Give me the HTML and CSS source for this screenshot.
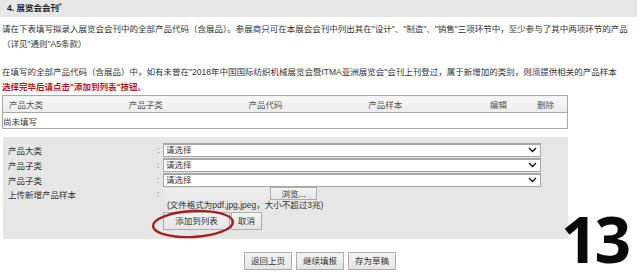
FILE: index.html
```html
<!DOCTYPE html>
<html lang="zh">
<head>
    <meta charset="UTF-8">
    <meta name="viewport" content="width=device-width, initial-scale=1.0">
    <title>展览会会刊</title>
    <link rel="stylesheet" href="styles.css">
</head>
<body>

<div class="page">
    <div class="section-title">4. 展览会会刊<span class="req">*</span></div>

    <div class="intro">
        <p>请在下表填写拟录入展览会会刊中的全部产品代码（含展品）。参展商只可在本展会会刊中列出其在"设计"、"制造"、"销售"三项环节中，至少参与了其中两项环节的产品<br>（详见"通则"A5条款）</p>
        <p>在填写的全部产品代码（含展品）中，如有未曾在"2018年中国国际纺织机械展览会暨ITMA亚洲展览会"会刊上刊登过，属于新增加的类别，则须提供相关的产品样本<br>
        <strong class="warn">选择完毕后请点击"添加到列表"按钮。</strong></p>
    </div>

    <table class="product-table">
        <thead>
            <tr>
                <th class="col-cat">产品大类</th>
                <th class="col-sub">产品子类</th>
                <th class="col-code">产品代码</th>
                <th class="col-sample">产品样本</th>
                <th class="col-edit">编辑</th>
                <th class="col-del">删除</th>
            </tr>
        </thead>
        <tbody>
            <tr>
                <td colspan="6">尚未填写</td>
            </tr>
        </tbody>
    </table>

    <div class="form-box">
        <div class="form-row">
            <label class="form-label">产品大类</label>
            <span class="colon">:</span>
            <div class="select-wrap">
                <select><option>请选择</option></select>
                <svg class="chevron" width="9" height="6" viewBox="0 0 9 6"><path d="M1 1 L4.5 4.5 L8 1" fill="none" stroke="#111" stroke-width="1.3"/></svg>
            </div>
        </div>
        <div class="form-row">
            <label class="form-label">产品子类</label>
            <span class="colon">:</span>
            <div class="select-wrap">
                <select><option>请选择</option></select>
                <svg class="chevron" width="9" height="6" viewBox="0 0 9 6"><path d="M1 1 L4.5 4.5 L8 1" fill="none" stroke="#111" stroke-width="1.3"/></svg>
            </div>
        </div>
        <div class="form-row">
            <label class="form-label">产品子类</label>
            <span class="colon">:</span>
            <div class="select-wrap">
                <select><option>请选择</option></select>
                <svg class="chevron" width="9" height="6" viewBox="0 0 9 6"><path d="M1 1 L4.5 4.5 L8 1" fill="none" stroke="#111" stroke-width="1.3"/></svg>
            </div>
        </div>
        <div class="form-row upload-row">
            <label class="form-label">上传新增产品样本</label>
            <span class="colon">:</span>
            <div class="file-input">
                <span class="file-path"></span>
                <button class="btn browse">浏览...</button>
            </div>
        </div>
        <div class="hint">(文件格式为pdf,jpg,jpeg，大小不超过3兆)</div>
        <div class="form-buttons">
            <button class="btn btn-add">添加到列表</button>
            <button class="btn btn-cancel">取消</button>
            <svg class="circle-mark" width="86" height="32" viewBox="0 0 86 32">
                <ellipse cx="43" cy="16" rx="40" ry="13" transform="rotate(-3 43 16)" fill="none" stroke="#a3221f" stroke-width="2.4"/>
            </svg>
        </div>
    </div>

    <div class="actions">
        <button class="btn">返回上页</button>
        <button class="btn">继续填报</button>
        <button class="btn">存为草稿</button>
    </div>

    <div class="page-num">13</div>
</div>

</body>
</html>
```

FILE: styles.css
```css
body {
    margin: 0;
    font-family: "Liberation Sans", "Noto Sans CJK SC", sans-serif;
    font-size: 8.5px;
    color: #333;
    background-color: #fff;
}
.page {
    position: relative;
    width: 640px;
    height: 274px;
    overflow: hidden;
}
.section-title {
    height: 17px;
    line-height: 17px;
    padding-left: 7px;
    margin-right: 3px;
    background-color: #e6e6e6;
    font-weight: bold;
    color: #222;
}
.req {
    color: #d00;
    font-size: 7px;
    vertical-align: top;
    line-height: 12px;
}
.intro {
    padding: 5px 0 0 2px;
}
.intro p {
    margin: 0 0 13px 0;
    line-height: 15px;
    white-space: nowrap;
}
.warn {
    color: #b5181c;
}
.product-table {
    width: 566px;
    margin: -13px 0 0 2px;
    border-collapse: collapse;
    border: 1px solid #a9a9a9;
}
.product-table th {
    height: 16px;
    padding: 0 0 0 6px;
    text-align: left;
    font-weight: normal;
    color: #555;
    background: linear-gradient(#f7f7f7, #ececec);
    border-bottom: 1px solid #a9a9a9;
}
.product-table td {
    height: 15px;
    padding: 0;
    color: #333;
}
.col-cat { width: 114px; }
.col-sub { width: 114px; }
.col-code { width: 114px; }
.col-sample { width: 116px; }
.col-edit { width: 41px; }
.col-del { width: 30px; }

.form-box {
    width: 560px;
    margin: 8px 0 0 3px;
    padding: 5px 0 9px 5px;
    background-color: #e6e6e6;
}
.form-row {
    display: flex;
    align-items: center;
    height: 15px;
}
.form-label {
    width: 149px;
    color: #333;
}
.colon {
    width: 6px;
    color: #777;
}
.select-wrap {
    position: relative;
    width: 378px;
    height: 14px;
}
.select-wrap select {
    appearance: none;
    -webkit-appearance: none;
    width: 100%;
    height: 14px;
    margin: 0;
    padding: 0 0 0 2px;
    border: 1px solid #a6a6a6;
    border-top: 2px solid #a6a6a6;
    border-radius: 0;
    background-color: #fff;
    font-family: inherit;
    font-size: 8.5px;
    line-height: 11px;
    color: #333;
}
.chevron {
    position: absolute;
    right: 4px;
    top: 4px;
}
.upload-row {
    height: 13px;
}
.file-input {
    display: flex;
    align-items: center;
    height: 13px;
}
.file-path {
    width: 107px;
    height: 12px;
    background-color: #ebebeb;
}
.btn {
    height: 15px;
    padding: 0 4px;
    border: 1px solid #adadad;
    border-radius: 0;
    background: linear-gradient(#f4f4f4, #e4e4e4);
    font-family: inherit;
    font-size: 8.5px;
    line-height: 13px;
    color: #333;
    cursor: pointer;
}
.browse {
    width: 47px;
    height: 13px;
    padding: 0;
}
.hint {
    padding-left: 159px;
    line-height: 10px;
    color: #333;
}
.form-buttons {
    position: relative;
    display: flex;
    gap: 1px;
    padding-left: 155px;
    margin-top: 2px;
}
.form-buttons .btn {
    height: 18px;
}
.btn-add {
    width: 67px;
}
.btn-cancel {
    width: 31px;
}
.circle-mark {
    position: absolute;
    left: 142px;
    top: -4px;
}
.actions {
    display: flex;
    justify-content: center;
    gap: 4px;
    margin-top: 13px;
}
.actions .btn {
    height: 18px;
    padding: 0 6px;
}
.page-num {
    position: absolute;
    left: 561px;
    top: 209px;
    font-family: "Open Sans", "Noto Sans", sans-serif;
    font-weight: bold;
    font-size: 64px;
    line-height: 60px;
    color: #0a0a0a;
    letter-spacing: -3px;
}
```
